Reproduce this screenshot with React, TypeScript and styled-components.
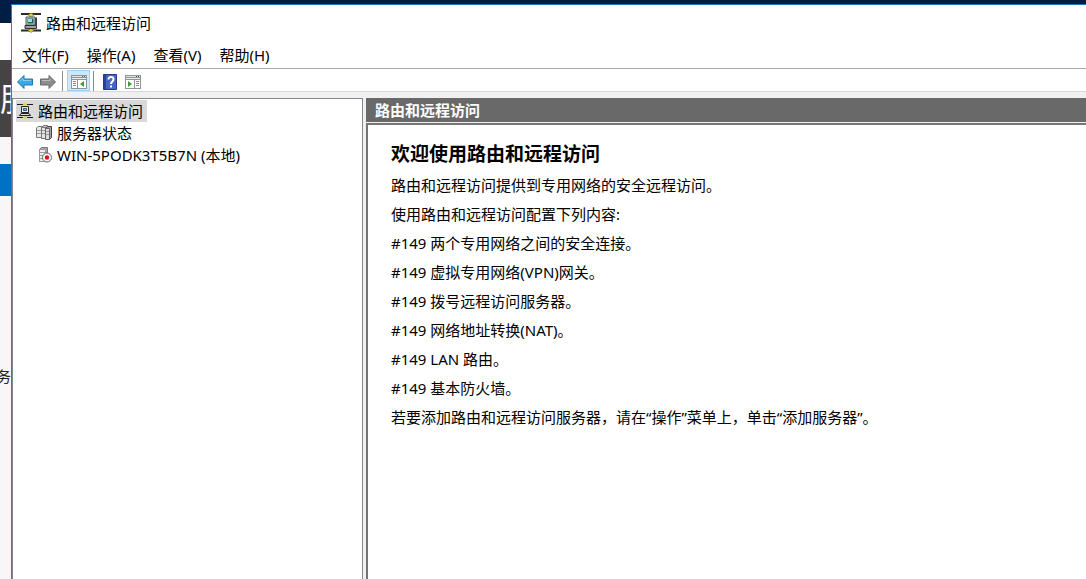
import React from "react";
import styled, { createGlobalStyle } from "styled-components";

const GlobalStyle = createGlobalStyle`
  * { box-sizing: border-box; }
  body {
    margin: 0;
    background: #f7f7f7;
    color: #000;
    font: 15px/22px "Noto Sans", "Noto Sans CJK SC", sans-serif;
  }
  button { font: inherit; color: inherit; }
  svg { display: block; flex: none; }
`;

const Desktop = styled.div`
  display: flex;
  height: 100vh;
  overflow: hidden;
  background: #001d44;
`;

const Behind = styled.div`
  display: flex;
  flex-direction: column;
  flex: none;
  width: 11px;
  background: #f7f7f7;
`;

const Strip = styled.div<{ $h: number; $bg: string }>`
  flex: none;
  height: ${(p) => p.$h}px;
  background: ${(p) => p.$bg};
  overflow: hidden;
  white-space: nowrap;
`;

const StripTitle = styled.span`
  display: block;
  color: #fff;
  font-size: 32px;
  line-height: 78px;
`;

const StripText = styled.span`
  display: flex;
  justify-content: flex-end;
  color: #222;
`;

const Window = styled.div`
  flex: 1;
  min-width: 0;
  margin-top: 4px;
  display: flex;
  flex-direction: column;
  background: #fff;
  border-top: 1px solid #1878b8;
  border-left: 1px solid #1f86b8;
`;

const TitleBar = styled.header`
  display: flex;
  align-items: center;
  gap: 5px;
  height: 37px;
  padding: 0 0 2px 9px;
`;

const MenuBar = styled.nav`
  display: flex;
  align-items: center;
  gap: 18px;
  height: 27px;
  padding-left: 10px;
  border-bottom: 1px solid #a8a8a8;
`;

const MenuItem = styled.button`
  padding: 0;
  border: 0;
  background: none;
`;

const ToolBar = styled.div`
  display: flex;
  align-items: flex-end;
  height: 23px;
  padding-left: 1px;
  border-bottom: 1px solid #d8d8d8;
`;

const ToolButton = styled.button<{ $active?: boolean }>`
  display: flex;
  align-items: center;
  justify-content: center;
  width: 23px;
  height: 21px;
  padding: 2px 0 0;
  border: 1px solid ${(p) => (p.$active ? "#99d1ff" : "transparent")};
  background: ${(p) => (p.$active ? "#cce8ff" : "none")};
`;

const Separator = styled.span`
  width: 1px;
  height: 20px;
  margin: 0 4px 0 3px;
  background: #8c8c8c;
`;

const Panes = styled.div`
  flex: 1;
  min-height: 0;
  display: flex;
  gap: 3px;
  padding-top: 6px;
  background: #f0f0f0;
`;

const TreePane = styled.aside`
  flex: none;
  width: 351px;
  background: #fff;
  border: 1px solid #828790;
  border-bottom: 0;
`;

const Tree = styled.ul`
  margin: 0;
  padding: 1px 0 0 3px;
  list-style: none;
`;

const Branch = styled.ul`
  margin: 0;
  padding: 0 0 0 19px;
  list-style: none;
`;

const TreeItem = styled.button<{ $selected?: boolean }>`
  display: flex;
  align-items: center;
  gap: 5px;
  height: 22px;
  padding: 0 4px 0 1px;
  border: 0;
  background: ${(p) => (p.$selected ? "#d9d9d9" : "none")};
  white-space: nowrap;
`;

const Detail = styled.main`
  flex: 1;
  min-width: 0;
  display: flex;
  flex-direction: column;
  gap: 1px;
`;

const DetailHeader = styled.div`
  height: 24px;
  padding-left: 9px;
  background: #696969;
  color: #fff;
  font-weight: 700;
  line-height: 24px;
`;

const Content = styled.section`
  flex: 1;
  padding: 16px 23px;
  background: #fff;
  border-top: 2px solid #747474;
  border-left: 2px solid #747474;
`;

const Heading = styled.h1`
  margin: 0 0 4px;
  font-size: 19px;
  line-height: 26px;
`;

const Line = styled.p`
  margin: 0;
  line-height: 29px;
`;

const RoutingIcon = () => (
  <svg width="20" height="20" viewBox="0 0 20 20">
    <path d="M0 1h20M0 17.500h20" stroke="#2c2a22" strokeWidth="2" />
    <path d="M10 0l3 2-3 2.500L7 2zM10 15.500l3 2-3 2-3-2z" fill="#e3cf1c" stroke="#6b5f10" strokeWidth=".5" />
    <path d="M5 4h9v8H5z" fill="#c4cccc" stroke="#555c5c" />
    <path d="M6.500 5.500h6v5h-6z" fill="#10656c" />
    <path d="M7 6h4v3H7z" fill="#8fe6d2" />
    <path d="M4 12.500h11.500v3H4z" fill="#9aa1a1" stroke="#333" />
    <path d="M15 4.500v8" stroke="#3d4444" strokeWidth="2" />
  </svg>
);

const RoutingSmallIcon = () => (
  <svg width="16" height="16" viewBox="0 0 16 16">
    <path d="M0 1.500h16M0 14.500h16" stroke="#1c1c1c" />
    <path d="M8 0l2.500 1.500L8 3 5.500 1.500zM8 13l2.500 1.500L8 16l-2.500-1.500z" fill="#dfd247" />
    <path d="M4.500 3.500h7v6h-7z" fill="#e9ece6" stroke="#222" />
    <path d="M6.500 5.500h3v2h-3z" fill="#7eb4d8" stroke="#31596e" />
    <path d="M4 10.500h8l1.500 2h-11z" fill="#ddd" stroke="#222" />
  </svg>
);

const ServersIcon = () => (
  <svg width="16" height="16" viewBox="0 0 16 16">
    <path d="M.5 3L2 1.500h4.500v11H.5z" fill="#e8e8e8" stroke="#777" />
    <path d="M5.500 2.500l2-2h4v13h-6z" fill="#c4c4c4" stroke="#777" />
    <path d="M5.500 2.500h4v11h-4z" fill="#e2e2e2" stroke="#777" />
    <path d="M9.500 3.500l2-2h4v11l-2 2h-4z" fill="#a0a0a0" stroke="#444" />
    <path d="M9.500 3.500h4v11h-4z" fill="#dedede" stroke="#666" />
    <path d="M1 5.500h4M1 8.500h4M6 5.500h3M6 8.500h3M10 6.500h3M10 9.500h3" stroke="#999" />
  </svg>
);

const ServerStoppedIcon = () => (
  <svg width="16" height="16" viewBox="0 0 16 16">
    <path d="M3.500 2.500l2-2h6v11l-2 3h-6z" fill="#aaa" stroke="#777" />
    <path d="M3.500 2.500h6v12h-6z" fill="#eee" stroke="#999" />
    <path d="M4 5.500h5M4 8.500h5M4 11.500h3" stroke="#999" />
    <circle cx="11" cy="10.500" r="4.500" fill="#fff" stroke="#666" />
    <circle cx="11" cy="10.500" r="2.200" fill="#e01016" />
  </svg>
);

const Arrow = ({ fill, stroke, flip }: { fill: string; stroke: string; flip?: boolean }) => (
  <svg width="16" height="16" viewBox="0 0 16 16">
    <path
      d={flip ? "M15.500 8L9 1.500V5H.5v6H9v3.500z" : "M.5 8L7 1.500V5h8.500v6H7v3.500z"}
      fill={fill}
      stroke={stroke}
      strokeLinejoin="round"
    />
    <path d={flip ? "M2 6.500h8V4.500" : "M2.500 7.500l3.500-3v2h8"} fill="none" stroke="#fff" opacity=".4" />
  </svg>
);

const PaneIcon = ({ right }: { right?: boolean }) => (
  <svg width="16" height="14" viewBox="0 0 16 14">
    <path d="M0 0h16v14H0z" fill="#8f9497" />
    <path d="M1 1h14v1H1z" fill="#dfe4e6" />
    <path d="M11 1h1v1h-1zM13 1h1v1h-1z" fill="#555" />
    <path d="M1 3h14v1H1z" fill="#e9edef" />
    {right ? (
      <>
        <path d="M1 5h8v8H1zM10 5h5v8h-5z" fill="#fff" />
        <path d="M11 6h3v1h-3zM11 8h3v1h-3zM11 10h3v1h-3z" fill="#888" />
        <path d="M3 6v6l4-3z" fill="#3f9d35" />
      </>
    ) : (
      <>
        <path d="M1 5h5v8H1zM7 5h8v8H7z" fill="#fff" />
        <path d="M2 6h3v1H2zM2 8h3v1H2zM2 10h3v1H2z" fill="#888" />
        <path d="M13 6v6L9 9z" fill="#3f9d35" />
      </>
    )}
  </svg>
);

const HelpIcon = () => (
  <svg width="14" height="16" viewBox="0 0 14 16">
    <path d="M.5.5h13v15H.5z" fill="#4565c8" stroke="#26398a" />
    <path d="M1 1h2v14H1z" fill="#2b4297" />
    <path d="M5.500 5.500C5.500 2 10.500 2.500 10.500 5.300 10.500 7.500 8 7.500 8 10" fill="none" stroke="#fff" strokeWidth="2" />
    <path d="M7 11.500h2v2H7z" fill="#fff" />
  </svg>
);

const menus = ["文件(F)", "操作(A)", "查看(V)", "帮助(H)"];

const features = [
  "两个专用网络之间的安全连接。",
  "虚拟专用网络(VPN)网关。",
  "拨号远程访问服务器。",
  "网络地址转换(NAT)。",
  "LAN 路由。",
  "基本防火墙。",
];

export default function App() {
  return (
    <Desktop lang="zh-CN">
      <GlobalStyle />
      <Behind>
        <Strip $h={23} $bg="#001d44" />
        <Strip $h={37} $bg="#fff" />
        <Strip $h={77} $bg="#444">
          <StripTitle>服</StripTitle>
        </Strip>
        <Strip $h={27} $bg="#f7f7f7" />
        <Strip $h={32} $bg="#0072c6" />
        <Strip $h={169} $bg="#f7f7f7" />
        <Strip $h={24} $bg="#f7f7f7">
          <StripText>务</StripText>
        </Strip>
      </Behind>
      <Window>
        <TitleBar>
          <RoutingIcon />
          <span>路由和远程访问</span>
        </TitleBar>
        <MenuBar>
          {menus.map((m) => (
            <MenuItem key={m}>{m}</MenuItem>
          ))}
        </MenuBar>
        <ToolBar>
          <ToolButton aria-label="后退">
            <Arrow fill="#38a9e4" stroke="#1878b4" />
          </ToolButton>
          <ToolButton aria-label="前进">
            <Arrow fill="#8d8d8d" stroke="#666" flip />
          </ToolButton>
          <Separator />
          <ToolButton aria-label="显示/隐藏控制台树" $active>
            <PaneIcon />
          </ToolButton>
          <Separator />
          <ToolButton aria-label="帮助">
            <HelpIcon />
          </ToolButton>
          <ToolButton aria-label="显示/隐藏操作窗格">
            <PaneIcon right />
          </ToolButton>
        </ToolBar>
        <Panes>
          <TreePane>
            <Tree>
              <li>
                <TreeItem $selected>
                  <RoutingSmallIcon />
                  路由和远程访问
                </TreeItem>
                <Branch>
                  <li>
                    <TreeItem>
                      <ServersIcon />
                      服务器状态
                    </TreeItem>
                  </li>
                  <li>
                    <TreeItem>
                      <ServerStoppedIcon />
                      WIN-5PODK3T5B7N (本地)
                    </TreeItem>
                  </li>
                </Branch>
              </li>
            </Tree>
          </TreePane>
          <Detail>
            <DetailHeader>路由和远程访问</DetailHeader>
            <Content>
              <Heading>欢迎使用路由和远程访问</Heading>
              <Line>路由和远程访问提供到专用网络的安全远程访问。</Line>
              <Line>使用路由和远程访问配置下列内容:</Line>
              {features.map((f) => (
                <Line key={f}>#149 {f}</Line>
              ))}
              <Line>若要添加路由和远程访问服务器，请在“操作”菜单上，单击“添加服务器”。</Line>
            </Content>
          </Detail>
        </Panes>
      </Window>
    </Desktop>
  );
}
